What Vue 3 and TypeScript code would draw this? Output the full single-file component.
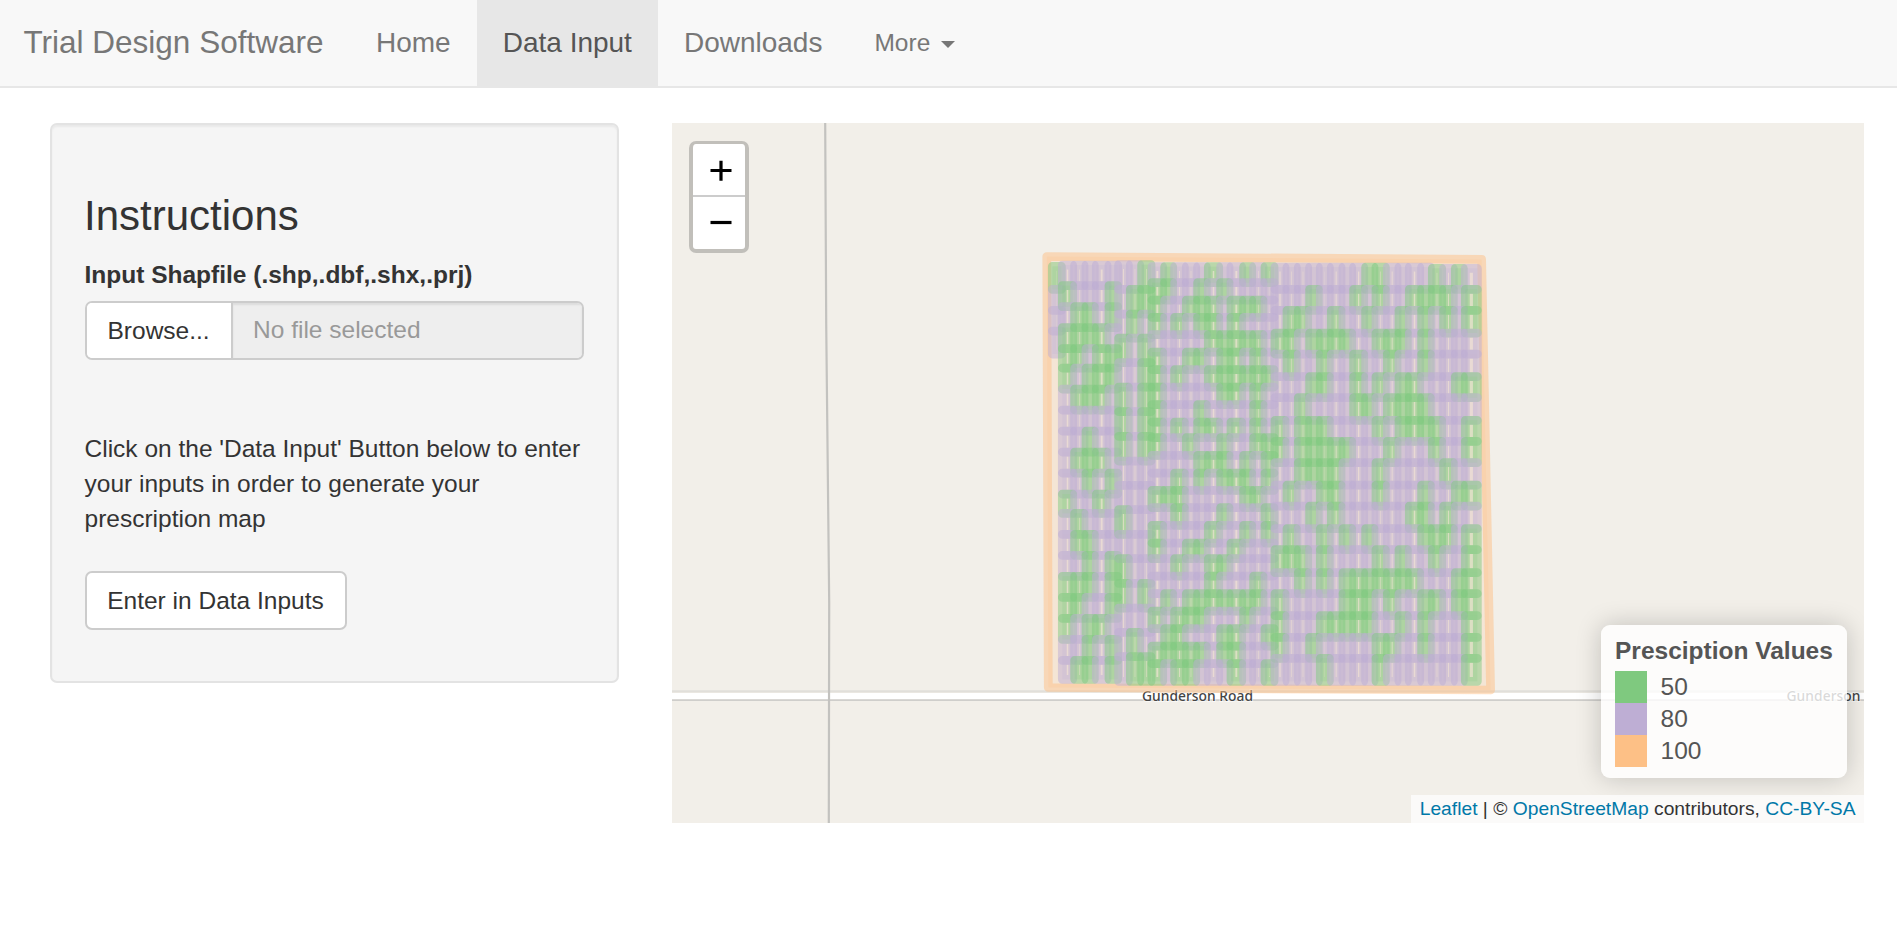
<script setup lang="ts">
interface Cell {
  x: number
  y: number
  w: number
  h: number
  color: string
}
interface Zone {
  cols: number[]
  rows: number[]
  values: string[]
}

const GREEN = '#7fc97f'
const PURPLE = '#beaed4'
const ORANGE = '#fdc086'

// Strip edges are in thirds of a pixel, measured from the field's north-west corner.
const zones: Zone[] = [
  {
    cols: [65, 95],
    rows: [79, 148, 211, 273, 342],
    values: ['G', 'P', 'P', 'P'],
  },
  {
    cols: [95, 131, 165, 196, 234, 264],
    rows: [75, 137, 200, 263, 326, 384, 447, 510, 573, 636, 699, 762, 820, 883, 946, 1009, 1072, 1135, 1198, 1261, 1318],
    values: [
      'PPPPP', 'GPPPG', 'PGGPG', 'GGGGP', 'GGPGG', 'GPGGG', 'PGGGP', 'PPPPP', 'PPGPP', 'PGGGP',
      'PPGPG', 'GPPGP', 'PGPPP', 'PGGPP', 'PPGPG', 'GGGPG', 'GGPPG', 'GPGGP', 'PPGPG', 'PGGPG',
    ],
  },
  {
    cols: [264, 298, 332, 364],
    rows: [74, 148, 222, 294, 368, 441, 515, 589, 663, 736, 809, 883, 956, 1030, 1104, 1177, 1250, 1324],
    values: [
      'PPG', 'PGG', 'PGP', 'GPG', 'PPG', 'GPG', 'GPG', 'GPG', 'PPP', 'PPP', 'GPP', 'PPP', 'GPP', 'GPG', 'PPP', 'PGP', 'PGG',
    ],
  },
  {
    cols: [364, 401, 431, 466, 500, 532, 569, 600, 638, 668, 702, 733],
    rows: [80, 128, 180, 232, 284, 336, 389, 441, 494, 546, 593, 646, 699, 751, 803, 856, 909, 956, 1008, 1061, 1113, 1166, 1218, 1271, 1324],
    values: [
      'PGPPPGPPGPG', 'GGPPGPGPPPP', 'GPPGGGPGGGP', 'GPGPGGPGPPP', 'PPPPPGGGGGP', 'GPPGGPGGPGP',
      'GPGPPGGGGGG', 'GPPPPPGGPGP', 'GPPPGPPPPGP', 'GPGPGGPGPGP', 'GPPGPPGPPGG', 'PPPPGGGPGPG',
      'PPGPGPGGGPG', 'GGGPPPPPGGP', 'PPGPPPGPPPG', 'GPPPPGPPGPG', 'GPPGGPPGPPP', 'PPGPPGGPPPP',
      'PPPPPGPPPGP', 'PGPGGGGGGGP', 'GPGGGPPPGPP', 'PGGPPPGGPPG', 'GGGGGPGGPPP', 'GPGGPPPGPPG',
    ],
  },
  {
    cols: [733, 768, 802, 836, 868, 901, 936, 968, 1004, 1035, 1069, 1104, 1135, 1172, 1204, 1238, 1273, 1303, 1343],
    rows: [81, 148, 211, 279, 342, 410, 473, 541, 604, 668, 735, 798, 866, 929, 998, 1061, 1127, 1192, 1255, 1324],
    values: [
      'PPPPPPPPGGPPPPGPGP', 'PPPGPPPGPGPPGGGGPG', 'PGGPPGPPGPPGPGPGPG', 'GGPGGGGPPGGGPGPPPP', 'PGPPGPPGPPGPPGPPPP',
      'PPPGGPPGPGPGGPPPGG', 'PPGPPPPGGPGGGGPPPP', 'GPGGGPPPPGPGGGGPPG', 'GPGGGGGPPPGPPPGPPG', 'PPGGGGPPPGPPPPPGPP',
      'PGPPGGPPPGPPPGPPGG', 'PPPGPGPPPPPPGGPGPP', 'PGPPGPGPGPPPPGGGPG', 'GGGPGPPPPGPGPPGPPG', 'PPGPGPGGGGGGGPPPGG',
      'GPPPPPGGGPGPPGGPGG', 'GPPPGGGGGPPGPGPPPG', 'GPPGPPPPPGGPPGPPPG', 'PPPPGPPPPGPPPPPPPG',
    ],
  },
]

const cells: Cell[] = zones.flatMap((z) =>
  z.values.flatMap((row, r) =>
    [...row].map((v, c) => {
      const left = z.cols[c] + (c === 0 ? 2 : 3)
      const right = z.cols[c + 1] - (c === row.length - 1 ? 1 : 3)
      // The four easternmost strips start slightly further south.
      const top = z.rows[r] + (r === 0 && c >= 14 ? 4 : 0)
      return {
        x: 358 + left / 3,
        y: 117 + top / 3,
        w: (right - left) / 3,
        h: (z.rows[r + 1] - top) / 3,
        color: v === 'G' ? GREEN : PURPLE,
      }
    }),
  ),
)

const legend = [
  { value: '50', name: 'green' },
  { value: '80', name: 'purple' },
  { value: '100', name: 'orange' },
]
</script>

<template>
  <div class="page">
    <nav class="navbar">
      <a class="brand">Trial Design Software</a>
      <a class="tab">Home</a>
      <a class="tab active">Data Input</a>
      <a class="tab">Downloads</a>
      <a class="tab more">More <span class="caret"></span></a>
    </nav>
    <main class="content">
      <section class="well">
        <h3>Instructions</h3>
        <label>Input Shapfile (.shp,.dbf,.shx,.prj)</label>
        <div class="file">
          <span class="browse">Browse...</span>
          <span class="filename">No file selected</span>
        </div>
        <p>Click on the 'Data Input' Button below to enter your inputs in order to generate your prescription map</p>
        <button class="btn">Enter in Data Inputs</button>
      </section>
      <section class="map">
        <svg class="canvas" width="1192" height="700" viewBox="0 0 1192 700">
          <path d="M0 568.4H1192" fill="none" stroke="#e1dfda" stroke-width="2.4" />
          <path d="M0 573.2H1192" stroke="#fff" stroke-width="6.4" />
          <path d="M0 577.1H1192" stroke="#cfcecb" stroke-width="1.6" />
          <path d="M153.2 0L154.2 200L157.200 480L156.800 700" fill="none" stroke="#c3c2bf" stroke-width="2.2" />
          <g class="road">
            <text x="470" y="578" textLength="111">Gunderson Road</text>
            <text x="1114.5" y="578" textLength="74">Gunderson</text>
          </g>
          <path
            d="M374.8 133.5L809.6 136.4L818.6 567L376.3 564.5Z"
            :fill="ORANGE" :stroke="ORANGE" fill-opacity="0.2" stroke-opacity="0.5" stroke-width="8.75" stroke-linejoin="round"
          />
          <g fill-opacity="0.2" stroke-opacity="0.5" stroke-width="8.75" stroke-linejoin="round">
            <rect v-for="(c, i) in cells" :key="i" :x="c.x" :y="c.y" :width="c.w" :height="c.h" :fill="c.color" :stroke="c.color" />
          </g>
        </svg>
        <div class="zoom">
          <span><svg width="22" height="22" viewBox="0 0 22 22"><path d="M0.5 10.5H21.5M11 0.8V20.8" stroke="#000" stroke-width="3.2" /></svg></span>
          <span><svg width="22" height="22" viewBox="0 0 22 22"><path d="M0.5 10.5H21.5" stroke="#000" stroke-width="3.2" /></svg></span>
        </div>
        <div class="legend">
          <strong>Presciption Values</strong>
          <div v-for="item in legend" :key="item.value" class="entry">
            <i :class="item.name"></i>{{ item.value }}
          </div>
        </div>
        <div class="attribution">
          <a>Leaflet</a> | © <a>OpenStreetMap</a> contributors, <a>CC-BY-SA</a>
        </div>
      </section>
    </main>
  </div>
</template>

<style>
body {
  margin: 0;
  background: #fff;
}
</style>

<style scoped>
.page {
  height: 943px;
  overflow: hidden;
  font: 24.5px/35px "Liberation Sans", Arial, sans-serif;
  color: #333;
}
.page * {
  box-sizing: border-box;
}
.navbar {
  display: flex;
  height: 88px;
  background: #f8f8f8;
  border-bottom: 2px solid #e7e7e7;
  color: #777;
}
.brand {
  width: 350px;
  padding: 25px 0 0 23.5px;
  font-size: 31.5px;
  white-space: nowrap;
}
.tab {
  padding: 25px 26px 0;
  font-size: 28px;
}
.active {
  background: #e7e7e7;
  color: #555;
}
.more {
  font-size: 24.5px;
}
.caret {
  display: inline-block;
  margin-left: 4px;
  vertical-align: middle;
  border-top: 7px solid #777;
  border-left: 7px solid transparent;
  border-right: 7px solid transparent;
}
.content {
  display: flex;
  align-items: flex-start;
  padding: 35px 33px 0 50px;
  gap: 53px;
}
.well {
  width: 569px;
  height: 560px;
  padding: 68px 33px 0;
  background: #f5f5f5;
  border: 2px solid #e3e3e3;
  border-radius: 7px;
  box-shadow: inset 0 2px 2px rgba(0, 0, 0, 0.05);
}
h3 {
  margin: 0 0 18px -1px;
  font-size: 42px;
  font-weight: normal;
  line-height: 46px;
}
label {
  display: block;
  height: 44px;
  margin-left: -0.5px;
  font-weight: bold;
}
.file {
  display: flex;
  width: 499px;
  height: 59px;
  border: 2px solid #ccc;
  border-radius: 7px;
  overflow: hidden;
}
.browse {
  width: 146px;
  padding: 10px 0 0 20.5px;
  background: #fff;
  border-right: 2px solid #ccc;
}
.filename {
  flex: 1;
  padding: 9px 0 0 20px;
  background: #eee;
  color: #999;
  box-shadow: inset 0 2px 2px rgba(0, 0, 0, 0.075);
}
p {
  width: 500px;
  margin: 71px 0 35px -0.5px;
}
.btn {
  width: 262px;
  height: 59px;
  padding: 0 1px 0 0;
  background: #fff;
  border: 2px solid #ccc;
  border-radius: 7px;
  font: inherit;
  color: #333;
}
.map {
  position: relative;
  width: 1192px;
  height: 700px;
  background: #f2efe9;
  overflow: hidden;
}
.canvas {
  display: block;
}
.road {
  font: 500 13.8px "Noto Sans", sans-serif;
  fill: #444;
  stroke: rgba(255, 255, 255, 0.6);
  stroke-width: 2px;
  paint-order: stroke;
}
.zoom {
  position: absolute;
  left: 17px;
  top: 18px;
  width: 60px;
  height: 112px;
  border: 4px solid rgba(0, 0, 0, 0.2);
  border-top-width: 3px;
  border-radius: 7px;
  background: #fff;
  background-clip: padding-box;
}
.zoom span {
  display: flex;
  height: 52px;
  padding-left: 3px;
  align-items: center;
  justify-content: center;
}
.zoom span:first-child {
  height: 53px;
  padding-top: 2px;
  border-bottom: 2px solid #ccc;
}
.legend {
  position: absolute;
  left: 929px;
  top: 502px;
  width: 246px;
  height: 153px;
  padding: 10px 14px;
  background: rgba(255, 255, 255, 0.8);
  border-radius: 9px;
  box-shadow: 0 0 26px rgba(0, 0, 0, 0.2);
  color: #555;
}
.legend strong {
  display: block;
  height: 36px;
  line-height: 32px;
  white-space: nowrap;
}
.entry {
  display: flex;
  height: 32px;
  line-height: 32px;
}
.entry i {
  width: 32px;
  height: 32px;
  margin-right: 13.5px;
}
.green {
  background: #7fc97f;
}
.purple {
  background: #beaed4;
}
.orange {
  background: #fdc086;
}
.attribution {
  position: absolute;
  right: 0;
  bottom: 0;
  height: 28px;
  padding: 0 8.5px;
  background: rgba(255, 255, 255, 0.7);
  font-size: 19.25px;
  line-height: 27px;
  white-space: nowrap;
}
.attribution a {
  color: #0078a8;
}
</style>
